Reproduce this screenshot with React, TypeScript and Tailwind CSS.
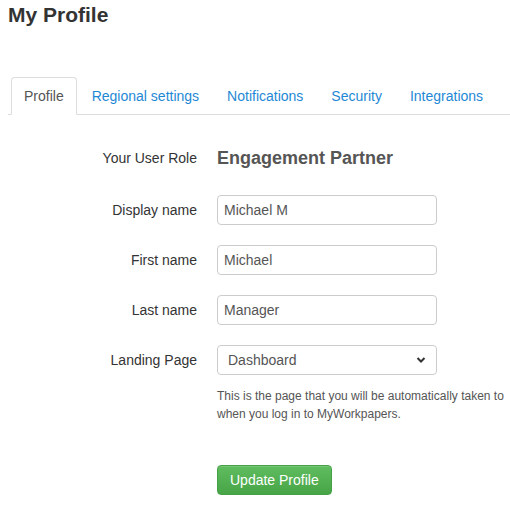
import { useState } from 'react';

const tabs = ['Profile', 'Regional settings', 'Notifications', 'Security', 'Integrations'];

const FieldRow = ({ label, value, first }: { label: string; value: string; first?: boolean }) => {
  const [val, setVal] = useState(value);
  return (
    <div className={`flex items-center ${first ? 'mt-[22px]' : 'mt-[20px]'}`}>
      <label className="w-[189px] text-right">{label}</label>
      <input
        value={val}
        onChange={(e) => setVal(e.target.value)}
        className="ml-[20px] h-[30px] w-[220px] rounded-[4px] border border-[#ccc] px-[6px] text-[14px] text-[#555] outline-none"
      />
    </div>
  );
};

const App = () => {
  const [active, setActive] = useState('Profile');

  return (
    <div className="h-[521px] w-[510px] overflow-hidden bg-white font-['Liberation_Sans',Arial,sans-serif] text-[14px] text-[#333]">
      <h1 className="pl-[8px] pt-[3px] text-[21px] font-bold leading-[23px]">My Profile</h1>

      <ul className="mt-[51px] ml-[8px] flex border-b border-[#ddd] pl-[3px]">
        {tabs.map((tab) => (
          <li key={tab} className="-mb-px mr-[2px]">
            <button
              type="button"
              onClick={() => setActive(tab)}
              className={`block rounded-t-[4px] border px-[12px] py-[8px] leading-[20px] ${
                active === tab
                  ? 'border-[#ddd] border-b-white bg-white text-[#555]'
                  : 'border-transparent text-[#1e88d5]'
              }`}
            >
              {tab}
            </button>
          </li>
        ))}
      </ul>

      <form className="pl-[8px]" onSubmit={(e) => e.preventDefault()}>
        <div className="mt-[28px] flex h-[30px] items-center">
          <span className="w-[189px] text-right">Your User Role</span>
          <span className="ml-[20px] text-[18px] font-bold text-[#555]">Engagement Partner</span>
        </div>

        <FieldRow label="Display name" value="Michael M" first />
        <FieldRow label="First name" value="Michael" />
        <FieldRow label="Last name" value="Manager" />

        <div className="mt-[20px] flex items-start">
          <label className="flex h-[30px] w-[189px] items-center justify-end">Landing Page</label>
          <div className="ml-[20px]">
            <div className="relative w-[220px]">
              <select className="h-[30px] w-full appearance-none rounded-[4px] border border-[#ccc] bg-white pl-[10px] text-[14px] text-[#555] outline-none">
                <option>Dashboard</option>
              </select>
              <svg
                className="pointer-events-none absolute right-[11px] top-[11px]"
                width="10"
                height="8"
                viewBox="0 0 10 8"
              >
                <path d="M1.5 2 L5 5.5 L8.5 2" fill="none" stroke="#333" strokeWidth="2" />
              </svg>
            </div>
            <p className="mt-[12px] w-[290px] text-[12px] leading-[18px] text-[#555]">
              This is the page that you will be automatically taken to when you log in to MyWorkpapers.
            </p>
            <button
              type="submit"
              className="mt-[42px] h-[30px] rounded-[4px] border border-[#46a046] bg-gradient-to-b from-[#5fbd5f] to-[#47a447] px-[12px] text-[14px] text-white shadow-[inset_0_1px_0_rgba(255,255,255,0.15)]"
            >
              Update Profile
            </button>
          </div>
        </div>
      </form>
    </div>
  );
};

export default App;
